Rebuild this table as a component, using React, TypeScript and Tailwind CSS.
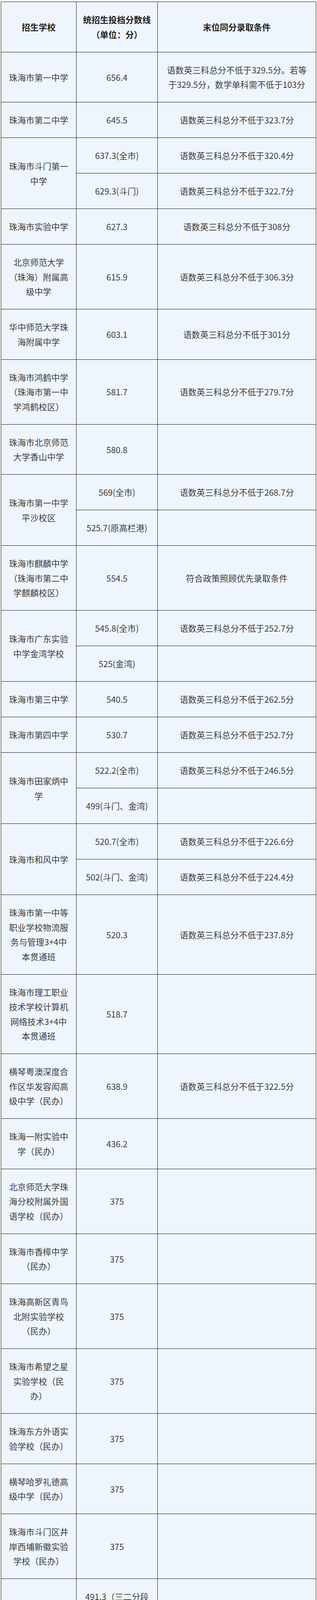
import React from "react";

type Sub = { score: string[]; cond: string[] };
type Row = { school: string[]; subs: Sub[] };

const s = (score: string[] | string, cond: string[] | string = []): Sub => ({
  score: Array.isArray(score) ? score : [score],
  cond: Array.isArray(cond) ? cond : [cond],
});

const rows: Row[] = [
  { school: ["珠海市第一中学"], subs: [s("656.4", ["语数英三科总分不低于329.5分。若等", "于329.5分，数学单科需不低于103分"])] },
  { school: ["珠海市第二中学"], subs: [s("645.5", "语数英三科总分不低于323.7分")] },
  { school: ["珠海市斗门第一", "中学"], subs: [s("637.3(全市)", "语数英三科总分不低于320.4分"), s("629.3(斗门)", "语数英三科总分不低于322.7分")] },
  { school: ["珠海市实验中学"], subs: [s("627.3", "语数英三科总分不低于308分")] },
  { school: ["北京师范大学", "（珠海）附属高", "级中学"], subs: [s("615.9", "语数英三科总分不低于306.3分")] },
  { school: ["华中师范大学珠", "海附属中学"], subs: [s("603.1", "语数英三科总分不低于301分")] },
  { school: ["珠海市鸿鹤中学", "（珠海市第一中", "学鸿鹤校区）"], subs: [s("581.7", "语数英三科总分不低于279.7分")] },
  { school: ["珠海市北京师范", "大学香山中学"], subs: [s("580.8")] },
  { school: ["珠海市第一中学", "平沙校区"], subs: [s("569(全市)", "语数英三科总分不低于268.7分"), s("525.7(原高栏港)")] },
  { school: ["珠海市麒麟中学", "（珠海市第二中", "学麒麟校区）"], subs: [s("554.5", "符合政策照顾优先录取条件")] },
  { school: ["珠海市广东实验", "中学金湾学校"], subs: [s("545.8(全市)", "语数英三科总分不低于252.7分"), s("525(金湾)")] },
  { school: ["珠海市第三中学"], subs: [s("540.5", "语数英三科总分不低于262.5分")] },
  { school: ["珠海市第四中学"], subs: [s("530.7", "语数英三科总分不低于252.7分")] },
  { school: ["珠海市田家炳中", "学"], subs: [s("522.2(全市)", "语数英三科总分不低于246.5分"), s("499(斗门、金湾)")] },
  { school: ["珠海市和风中学"], subs: [s("520.7(全市)", "语数英三科总分不低于226.6分"), s("502(斗门、金湾)", "语数英三科总分不低于224.4分")] },
  { school: ["珠海市第一中等", "职业学校物流服", "务与管理3+4中", "本贯通班"], subs: [s("520.3", "语数英三科总分不低于237.8分")] },
  { school: ["珠海市理工职业", "技术学校计算机", "网络技术3+4中", "本贯通班"], subs: [s("518.7")] },
  { school: ["横琴粤澳深度合", "作区华发容闳高", "级中学（民办）"], subs: [s("638.9", "语数英三科总分不低于322.5分")] },
  { school: ["珠海一附实验中", "学（民办）"], subs: [s("436.2")] },
  { school: ["北京师范大学珠", "海分校附属外国", "语学校（民办）"], subs: [s("375")] },
  { school: ["珠海市香樟中学", "（民办）"], subs: [s("375")] },
  { school: ["珠海高新区青鸟", "北附实验学校", "（民办）"], subs: [s("375")] },
  { school: ["珠海市希望之星", "实验学校（民", "办）"], subs: [s("375")] },
  { school: ["珠海东方外语实", "验学校（民办）"], subs: [s("375")] },
  { school: ["横琴哈罗礼德高", "级中学（民办）"], subs: [s("375")] },
  { school: ["珠海市斗门区井", "岸西埔新徽实验", "学校（民办）"], subs: [s("375")] },
  { school: ["珠海市第一中等", "职业学校"], subs: [s(["491.3（三二分段", "类专业）"]), s(["472.9（普通类专", "业）"])] },
  { school: ["珠海市卫生学校"], subs: [s(["460（三二分段类", "专业）"]), s(["429.4（普通类专", "业）"], "语数英三科总分不低于189.1分")] },
  { school: ["珠海市理工职业", "技术学校（香洲", "校区）"], subs: [s(["456.9（三二分段", "类专业）"]), s(["435（普通类专", "业）"], "语数英三科总分不低于210.1分")] },
  { school: ["珠海市理工职业", "技术学校（斗门", "校区）"], subs: [s(["443.5（三二分段", "类专业）"]), s(["412.6（普通类专", "业）"], "语数英三科总分不低于178分")] },
  { school: ["珠海市技师学院", "（珠海市高级技", "工学校）"], subs: [s("385.5")] },
];

const note: string[] = [
  "根据《珠海市2025年初中学业水平考试与高中阶段学校招生",
  "工作实施细则》规定，如若所投档计划数末名有两人或以上",
  "投档总分（含一位小数）相同的，则按“同分比较”原则找",
  "出优先录取的考生，比较顺序为：",
  "",
  "（1）符合政策照顾优先录取条件的。",
  "",
  "（2）比较语文、数学、英语三科的总分，总分高的优先录",
  "取。",
  "",
  "（3）依次按数学、语文、英语的顺序比较分数，从高分到低",
  "分择优录取。",
  "",
  "（4）比较等级性考试科目的等级，高等级数量多者优先录",
  "取。",
];

const Lines = ({ lines }: { lines: string[] }) => (
  <>
    {lines.map((l, i) => (
      <div key={i} className="whitespace-nowrap">
        {l === "" ? "\u00a0" : l}
      </div>
    ))}
  </>
);

const cell =
  "border border-[#151515] px-[15px] py-[26.25px] text-center align-middle leading-[37.5px]";

export default function App() {
  return (
    <div className="w-[812px] bg-white pt-[4px] pl-[2px] font-['Noto_Sans_CJK_SC','Noto_Sans',sans-serif] text-[21.7px] text-[#3d3d3d]">
      <table className="w-[807px] table-fixed border-collapse bg-[#eef5fd]">
        <colgroup>
          <col className="w-[193px]" />
          <col className="w-[208px]" />
          <col className="w-[406px]" />
        </colgroup>
        <thead>
          <tr>
            <th className={`${cell} font-bold text-[#222]`}>
              <Lines lines={["招生学校"]} />
            </th>
            <th className={`${cell} font-bold text-[#222]`}>
              <Lines lines={["统招生投档分数线", "（单位：分）"]} />
            </th>
            <th className={`${cell} font-bold text-[#222]`}>
              <Lines lines={["末位同分录取条件"]} />
            </th>
          </tr>
        </thead>
        <tbody>
          {rows.map((r, ri) =>
            r.subs.map((sub, si) => (
              <tr key={`${ri}-${si}`}>
                {si === 0 && (
                  <td className={cell} rowSpan={r.subs.length}>
                    <Lines lines={r.school} />
                  </td>
                )}
                <td className={cell}>
                  <Lines lines={sub.score} />
                </td>
                <td className={cell}>
                  <Lines lines={sub.cond} />
                </td>
              </tr>
            ))
          )}
          <tr>
            <td className={cell}>
              <Lines lines={["备注"]} />
            </td>
            <td
              colSpan={2}
              className="border border-[#151515] px-[13px] py-[27.5px] text-left align-middle leading-[38px] tracking-[-0.15px]"
            >
              <Lines lines={note} />
            </td>
          </tr>
        </tbody>
      </table>
    </div>
  );
}
